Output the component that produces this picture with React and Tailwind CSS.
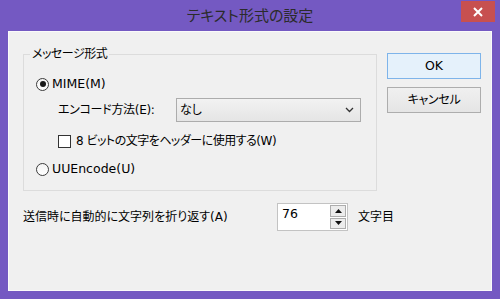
import React from "react";

const font = { fontFamily: '"DejaVu Sans", "Noto Sans CJK JP", sans-serif' };

function Radio({ checked }) {
  return (
    <span className="w-[13px] h-[13px] rounded-full border border-[#3c3c3c] bg-gradient-to-b from-[#f4f4f4] to-[#ffffff] flex items-center justify-center shrink-0">
      {checked && <span className="w-[6px] h-[6px] rounded-full bg-[#1a1a1a]" />}
    </span>
  );
}

export default function App() {
  return (
    <div
      className="w-[500px] h-[299px] bg-[#7459c2] flex flex-col text-[12px] text-black overflow-hidden [font-feature-settings:'palt']"
      style={font}
    >
      {/* title bar */}
      <div className="relative h-[31px] flex items-center justify-center shrink-0">
        <span className="text-[15px] text-[#2b2b2b] mt-[2px]">テキスト形式の設定</span>
        <div className="absolute right-[5px] top-[1px] w-[34px] h-[21px] bg-[#c75050] flex items-center justify-center">
          <svg width="10" height="10" viewBox="0 0 10 10">
            <path d="M1 1 L9 9 M9 1 L1 9" stroke="#fff" strokeWidth="2" />
          </svg>
        </div>
      </div>

      {/* client */}
      <div className="mx-[8px] h-[260px] bg-[#f0f0f0] border border-[#fafafa] pl-[14px] pt-[22px]">
        <div className="flex">
          {/* group box */}
          <div className="relative w-[354px] h-[137px] border border-[#dcdcdc] flex flex-col pl-[12px]">
            <span className="absolute left-[6px] top-[-9px] px-[2px] bg-[#f0f0f0] leading-[16px] tracking-[-0.5px]">メッセージ形式</span>
            <div className="h-[20px] mt-[19px] flex items-center gap-[3px]">
              <Radio checked />
              <span className="text-[12.5px]">MIME(M)</span>
            </div>
            <div className="h-[24px] mt-[4px] flex items-center pl-[22px]">
              <span className="w-[118px] tracking-[-0.3px]">エンコード方法(E):</span>
              <div className="w-[185px] h-[24px] border border-[#acacac] bg-gradient-to-b from-[#f2f2f2] to-[#e5e5e5] flex items-center justify-between pl-[3px] pr-[6px]">
                <span>なし</span>
                <svg width="9" height="6" viewBox="0 0 9 6">
                  <path d="M1 1 L4.5 4.5 L8 1" stroke="#333" strokeWidth="1.3" fill="none" />
                </svg>
              </div>
            </div>
            <div className="h-[20px] mt-[9px] flex items-center pl-[22px] gap-[5px]">
              <span className="w-[13px] h-[13px] border border-[#333] bg-white shrink-0" />
              <span className="tracking-[-0.5px]">8 ビットの文字をヘッダーに使用する(W)</span>
            </div>
            <div className="h-[20px] mt-[8px] flex items-center gap-[3px]">
              <Radio />
              <span className="text-[12.5px]">UUEncode(U)</span>
            </div>
          </div>

          {/* buttons */}
          <div className="ml-[10px] -mt-[1px] flex flex-col gap-[8px]">
            <div className="w-[94px] h-[26px] border border-[#7eb4ea] bg-[#e5f1fb] flex items-center justify-center text-[12.5px]">
              OK
            </div>
            <div className="w-[94px] h-[26px] border border-[#adadad] bg-gradient-to-b from-[#f0f0f0] to-[#e5e5e5] flex items-center justify-center tracking-[-0.3px]">
              キャンセル
            </div>
          </div>
        </div>

        {/* wrap row */}
        <div className="mt-[12px] h-[28px] flex items-center">
          <span className="w-[254px]">送信時に自動的に文字列を折り返す(A)</span>
          <div className="w-[71px] h-[28px] border border-[#c3c3c3] bg-white flex">
            <span className="flex-1 pl-[4px] pt-[2px] text-[12.5px] leading-[16px]">76</span>
            <div className="w-[17px] flex flex-col gap-[1px] py-[1px] pr-[1px]">
              <div className="flex-1 border border-[#adadad] bg-[#ececec] flex items-center justify-center">
                <svg width="7" height="4" viewBox="0 0 7 4"><path d="M0 4 L3.5 0 L7 4 Z" fill="#111" /></svg>
              </div>
              <div className="flex-1 border border-[#adadad] bg-[#ececec] flex items-center justify-center">
                <svg width="7" height="4" viewBox="0 0 7 4"><path d="M0 0 L3.5 4 L7 0 Z" fill="#111" /></svg>
              </div>
            </div>
          </div>
          <span className="ml-[10px]">文字目</span>
        </div>
      </div>
    </div>
  );
}
